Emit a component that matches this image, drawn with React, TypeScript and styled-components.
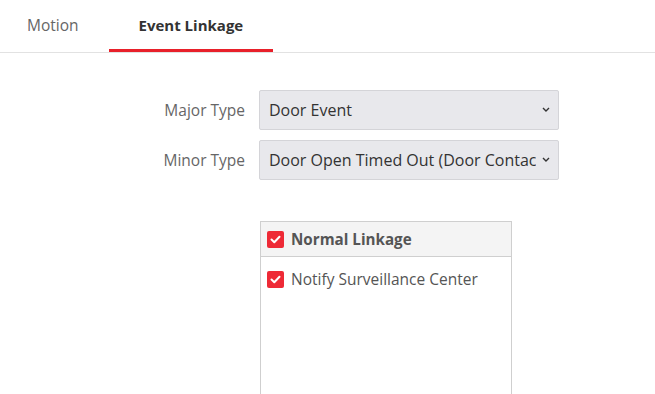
import React from 'react'
import styled, { createGlobalStyle } from 'styled-components'

const GlobalStyle = createGlobalStyle`
  html, body {
    margin: 0;
    padding: 0;
    background: #fff;
    font-family: 'Open Sans', 'Noto Sans', sans-serif;
    overflow: hidden;
  }
`

const Page = styled.div`
  width: 655px;
  height: 394px;
  overflow: hidden;
`

const TabBar = styled.div`
  display: flex;
  height: 52px;
  border-bottom: 1px solid #e2e2e2;
  margin-left: -3px;
`

const Tab = styled.div<{ $active?: boolean }>`
  display: flex;
  align-items: center;
  padding: 0 30px;
  font-size: ${(p) => (p.$active ? '15px' : '15.5px')};
  color: ${(p) => (p.$active ? '#333' : '#666')};
  font-weight: ${(p) => (p.$active ? 700 : 400)};
  border-bottom: 3px solid ${(p) => (p.$active ? '#e8202a' : 'transparent')};
  box-sizing: border-box;
  height: 52px;
`

const Form = styled.div`
  display: grid;
  grid-template-columns: 245px 300px;
  column-gap: 14px;
  row-gap: 10px;
  margin-top: 37px;
  align-items: center;
`

const Label = styled.label`
  text-align: right;
  font-size: 15.5px;
  color: #666;
`

const SelectWrap = styled.div`
  position: relative;
  height: 40px;
`

const Select = styled.select`
  appearance: none;
  width: 100%;
  height: 40px;
  box-sizing: border-box;
  border: 1px solid #d4d4d8;
  border-radius: 2px;
  background: #e8e8ec;
  color: #333;
  font-family: 'Open Sans', 'Noto Sans', sans-serif;
  font-size: 16px;
  padding: 0 22px 0 9px;
  outline: none;
`

const Chevron = styled.svg`
  position: absolute;
  right: 9px;
  top: 17px;
  pointer-events: none;
`

const LinkageBox = styled.div`
  margin: 41px 0 0 260px;
  width: 252px;
  height: 200px;
  box-sizing: border-box;
  border: 1px solid #cfcfcf;
`

const LinkageHeader = styled.div`
  display: flex;
  align-items: center;
  gap: 7px;
  height: 34px;
  padding-left: 6px;
  background: #f4f4f4;
  border-bottom: 1px solid #cfcfcf;
  font-size: 15.2px;
  font-weight: 700;
  color: #555;
`

const LinkageItem = styled.div`
  display: flex;
  align-items: center;
  gap: 7px;
  height: 44px;
  padding-left: 6px;
  font-size: 15.5px;
  color: #555;
`

const Check = styled.span`
  display: inline-flex;
  align-items: center;
  justify-content: center;
  width: 17px;
  height: 17px;
  border-radius: 2px;
  background: #ee2a36;
  flex-shrink: 0;
`

const CheckMark = () => (
  <Check>
    <svg width="11" height="9" viewBox="0 0 11 9">
      <path d="M1.5 4.5 L4.3 7.2 L9.5 1.8" fill="none" stroke="#fff" strokeWidth="2" strokeLinecap="round" strokeLinejoin="round" />
    </svg>
  </Check>
)

const TypeSelect: React.FC<{ value: string }> = ({ value }) => (
  <SelectWrap>
    <Select defaultValue={value}>
      <option value={value}>{value}</option>
    </Select>
    <Chevron width="8" height="5" viewBox="0 0 8 5">
      <path d="M1 1 L4 4 L7 1" fill="none" stroke="#333" strokeWidth="1.4" />
    </Chevron>
  </SelectWrap>
)

export default function App() {
  return (
    <Page>
      <GlobalStyle />
      <TabBar>
        <Tab>Motion</Tab>
        <Tab $active>Event Linkage</Tab>
      </TabBar>
      <Form>
        <Label>Major Type</Label>
        <TypeSelect value="Door Event" />
        <Label>Minor Type</Label>
        <TypeSelect value="Door Open Timed Out (Door Contact)" />
      </Form>
      <LinkageBox>
        <LinkageHeader>
          <CheckMark />
          Normal Linkage
        </LinkageHeader>
        <LinkageItem>
          <CheckMark />
          Notify Surveillance Center
        </LinkageItem>
      </LinkageBox>
    </Page>
  )
}
